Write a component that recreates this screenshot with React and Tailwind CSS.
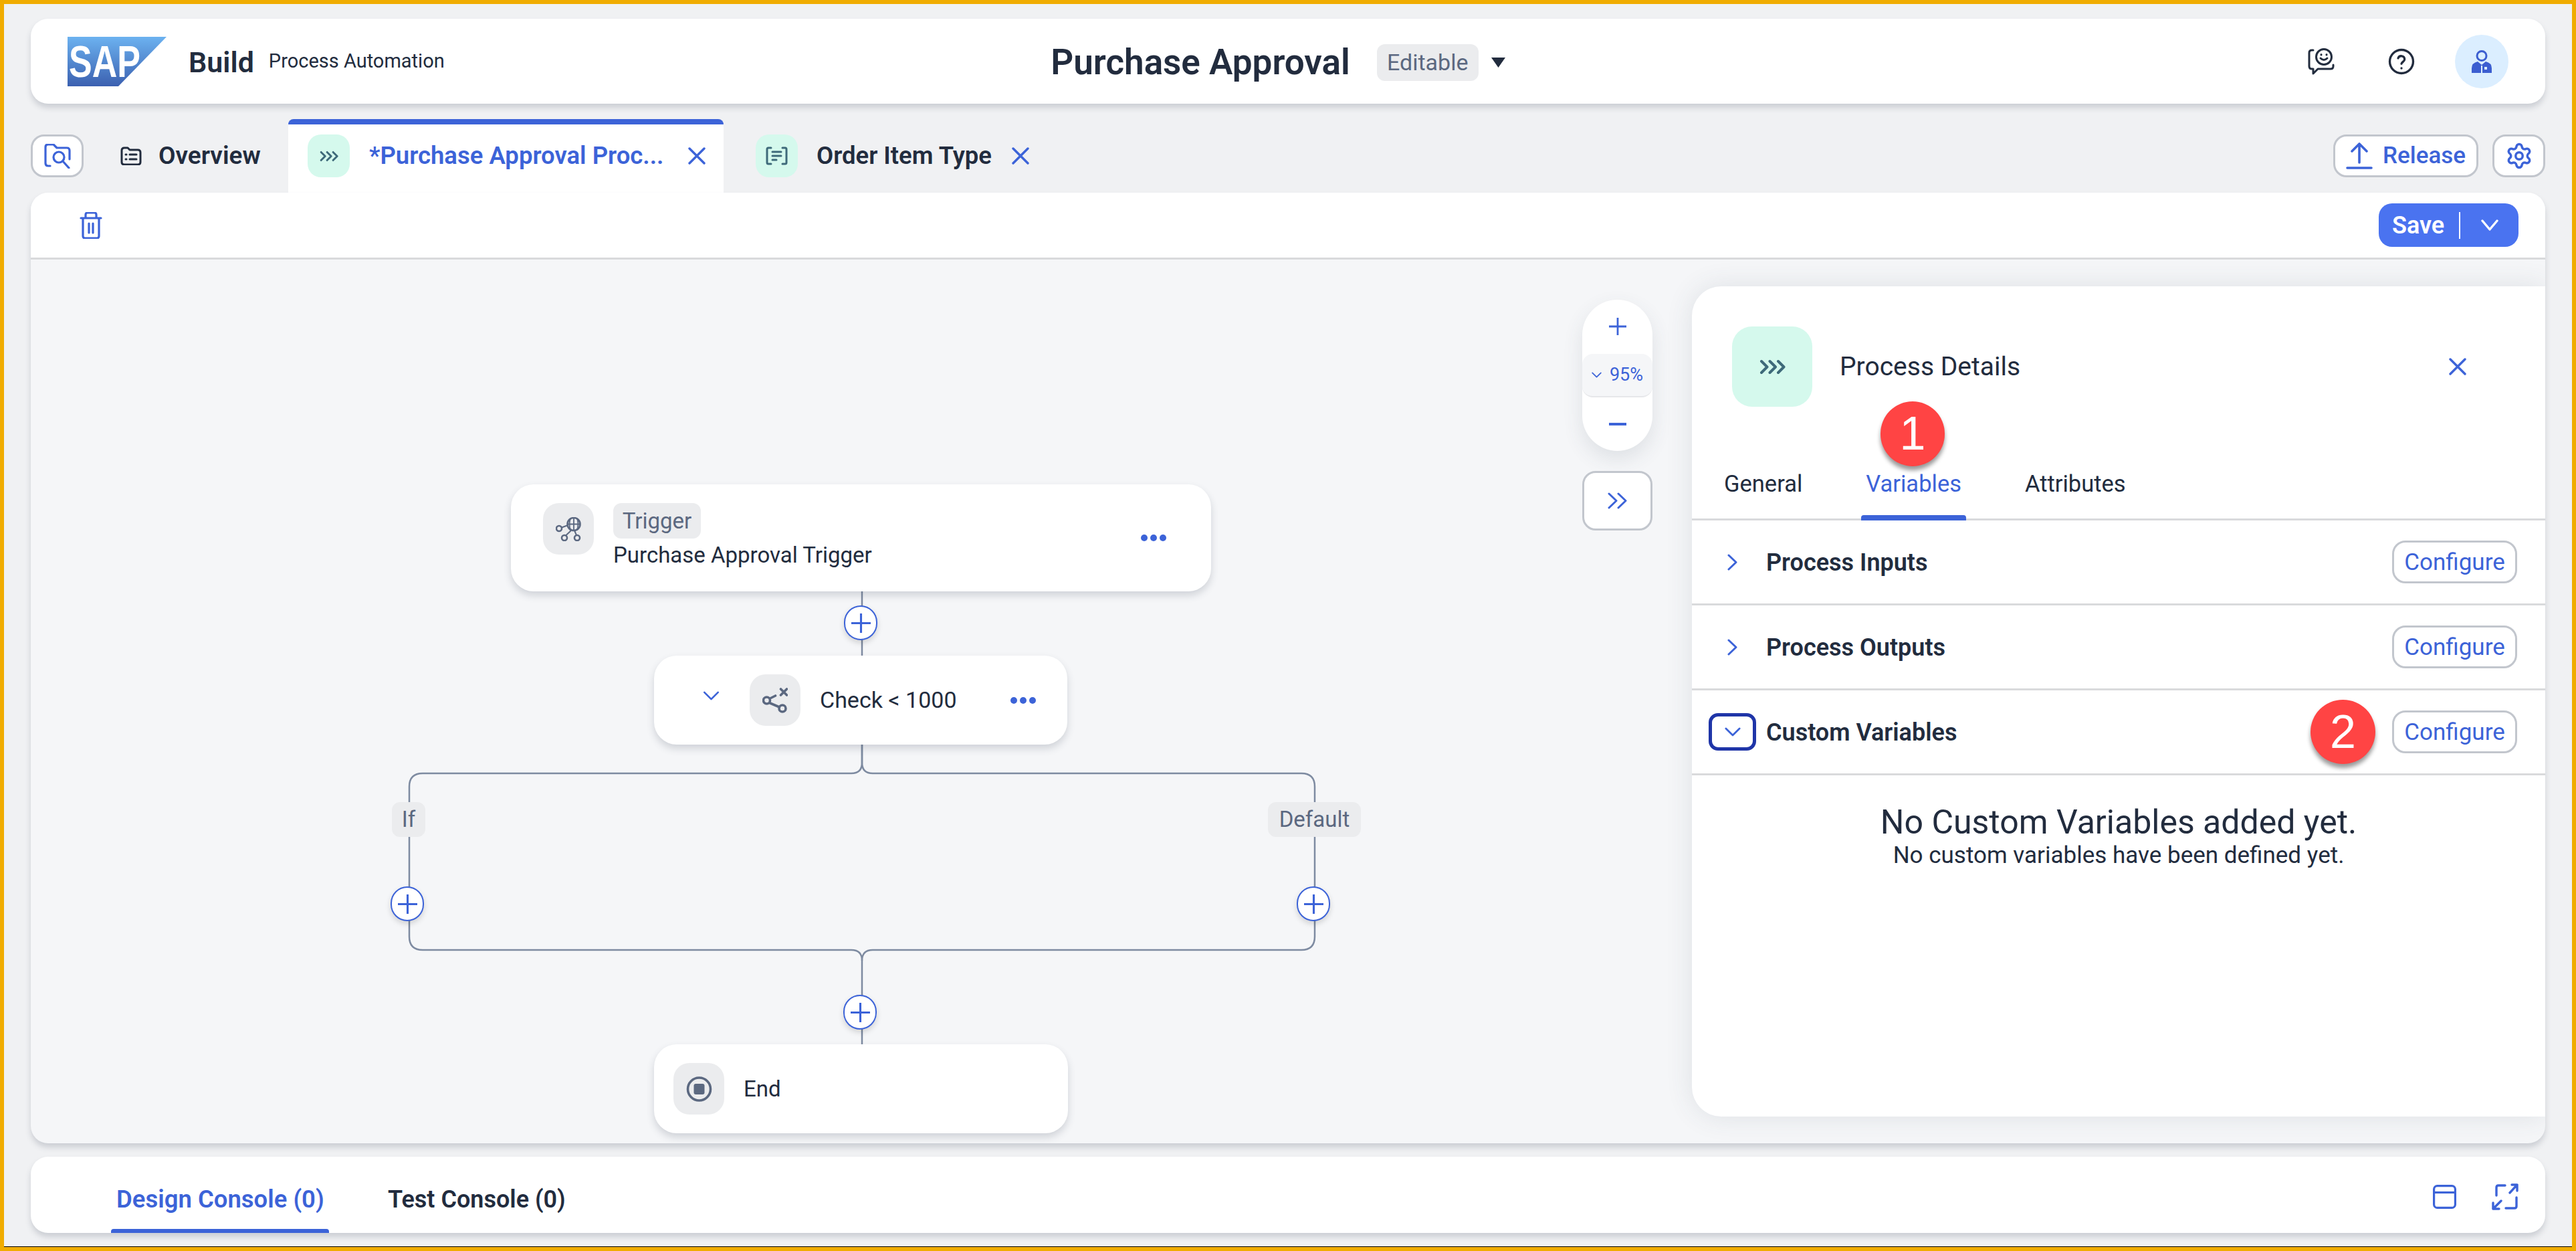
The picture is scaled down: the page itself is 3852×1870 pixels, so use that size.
import React from 'react'
import { Settings } from 'lucide-react'

const Chevrons3 = ({ className }) => (
  <svg viewBox="0 0 39 23" className={className} fill="none" stroke="#3e6a7a" strokeWidth="4" strokeLinecap="round" strokeLinejoin="round">
    <path d="M3 3l8.5 8.5L3 20M15.5 3l8.5 8.5-8.5 8.5M28 3l8.5 8.5L28 20" />
  </svg>
)

const Close = ({ className }) => (
  <svg viewBox="0 0 26 26" className={className} fill="none" stroke="#3c63d8" strokeWidth="3.4" strokeLinecap="round">
    <path d="M2 2l22 22M24 2L2 24" />
  </svg>
)

const ChevronDown = ({ className, sw = 3 }) => (
  <svg viewBox="0 0 26 15" className={className} fill="none" stroke="#3c63d8" strokeWidth={sw} strokeLinecap="round" strokeLinejoin="round">
    <path d="M2 2l11 11L24 2" />
  </svg>
)

const ChevronRight = () => (
  <svg viewBox="0 0 17 25" className="w-[17px] h-[25px]" fill="none" stroke="#3c63d8" strokeWidth="3" strokeLinecap="round" strokeLinejoin="round">
    <path d="M3 2l11 10.5L3 23" />
  </svg>
)

const PlusLines = ({ className, sw = 3 }) => (
  <svg viewBox="0 0 28 28" className={className} fill="none" stroke="#3c63d8" strokeWidth={sw}>
    <path d="M14 0v28M0 14h28" />
  </svg>
)

function Dots() {
  return (
    <div className="flex gap-[4px]">
      <span className="w-[10px] h-[10px] rounded-full bg-[#3c63d8]" />
      <span className="w-[10px] h-[10px] rounded-full bg-[#3c63d8]" />
      <span className="w-[10px] h-[10px] rounded-full bg-[#3c63d8]" />
    </div>
  )
}

function ConfigureBtn() {
  return (
    <button className="w-[187px] h-[64px] pt-[2px] rounded-[20px] border-[3px] border-[#c2c6cd] bg-white text-[#3c63d8] text-[35px]">
      Configure
    </button>
  )
}

function AccordionRow({ label, open, children }) {
  return (
    <div className="h-[127px] border-b-[3px] border-[#d9dadc] flex items-center pl-[25px] pr-[42px]">
      <div className={open
        ? 'w-[71px] h-[56px] rounded-[14px] border-[5px] border-[#1f35a8] flex items-center justify-center'
        : 'w-[71px] h-[56px] flex items-center justify-center'}>
        {open ? <ChevronDown className="w-[24px] h-[14px]" /> : <ChevronRight />}
      </div>
      <span className="ml-[15px] mt-[2px] text-[36px] font-semibold text-[#222c3e]">{label}</span>
      <div className="ml-auto flex items-center gap-[25px]">
        {children}
        <ConfigureBtn />
      </div>
    </div>
  )
}

function PlusNode({ className }) {
  return (
    <div className={`absolute w-[50px] h-[52px] rounded-full bg-white border-[2.5px] border-[#3c63d8] shadow-[0_4px_8px_rgba(0,0,0,0.15)] flex items-center justify-center ${className}`}>
      <PlusLines className="w-[29px] h-[29px]" />
    </div>
  )
}

function Chip({ children, className = '' }) {
  return (
    <span className={`bg-[#ebecee] rounded-[12px] text-[#5b6880] flex items-center justify-center ${className}`}>
      {children}
    </span>
  )
}

function IconBox({ children, className = '' }) {
  return (
    <div className={`w-[76px] h-[77px] rounded-[24px] bg-[#ebecee] flex items-center justify-center shrink-0 ${className}`}>
      {children}
    </div>
  )
}

function Canvas() {
  return (
    <>
      <svg className="absolute left-0 top-0 w-[2100px] h-[1321px]" viewBox="0 0 2100 1321" fill="none" stroke="#7e8ba1" strokeWidth="2.5">
        <path d="M1243 496V592" />
        <path d="M1243 725v27q0 16-16 16H586q-20 0-20 20V1012q0 20 20 20H1227q16 0 16 16V1173" />
        <path d="M1243 725v27q0 16 16 16H1900q20 0 20 20V1012q0 20-20 20H1259q-16 0-16 16" />
      </svg>

      <div className="absolute left-[718px] top-[336px] w-[1047px] h-[160px] rounded-[34px] bg-white shadow-[0_6px_12px_rgba(60,70,90,0.2)] flex pl-[48px] pt-[28px]">
        <IconBox>
          <svg viewBox="0 0 38 36" className="w-[38px] h-[36px]" fill="none" stroke="#5b6880" strokeWidth="2.6">
            <circle cx="27" cy="10.5" r="9.5" />
            <path d="M17.5 10.5h19M27 1v19M22 2q-3 8.500 0 17M32 2q3 8.500 0 17" strokeWidth="1.8" />
            <circle cx="5" cy="17" r="4" />
            <circle cx="13" cy="31" r="4" />
            <circle cx="32" cy="31" r="4" />
            <path d="M9 15.500l8-3M23 20l-8 7.500M28 20l3 7" strokeWidth="2" />
          </svg>
        </IconBox>
        <div className="ml-[29px]">
          <Chip className="w-[131px] h-[53px] text-[33px]">Trigger</Chip>
          <div className="mt-[3px] text-[33px] text-[#222c3e] leading-[44px] whitespace-nowrap">Purchase Approval Trigger</div>
        </div>
        <div className="ml-auto mr-[67px] mt-[47px]"><Dots /></div>
      </div>

      <PlusNode className="left-[1216px] top-[517px]" />

      <div className="absolute left-[932px] top-[592px] w-[618px] h-[133px] rounded-[34px] bg-white shadow-[0_6px_12px_rgba(60,70,90,0.2)] flex items-center pl-[73px] pr-[47px]">
        <ChevronDown className="w-[25px] h-[14px] -mt-[13px]" sw={2.8} />
        <IconBox className="ml-[45px]">
          <svg viewBox="0 0 38 38" className="w-[38px] h-[38px]" fill="none" stroke="#5b6880" strokeWidth="3.6" strokeLinecap="round">
            <circle cx="6.500" cy="19" r="5" />
            <circle cx="30" cy="31" r="5" />
            <path d="M11.500 16l8-4M11.500 23l14 6M27.500 2l9 9M36.500 2l-9 9" />
          </svg>
        </IconBox>
        <span className="ml-[29px] text-[34px] text-[#222c3e]">Check &lt; 1000</span>
        <div className="ml-auto"><Dots /></div>
      </div>

      <Chip className="absolute left-[540px] top-[811px] w-[50px] h-[52px] text-[33px]">If</Chip>
      <Chip className="absolute left-[1850px] top-[811px] w-[139px] h-[52px] text-[33px]">Default</Chip>
      <PlusNode className="left-[538px] top-[937px]" />
      <PlusNode className="left-[1893px] top-[937px]" />
      <PlusNode className="left-[1215px] top-[1099px]" />

      <div className="absolute left-[932px] top-[1173px] w-[619px] h-[133px] rounded-[34px] bg-white shadow-[0_6px_12px_rgba(60,70,90,0.2)] flex items-center pl-[29px]">
        <IconBox className="w-[75px]">
          <svg viewBox="0 0 39 38" className="w-[39px] h-[38px]">
            <circle cx="19.500" cy="19" r="17" fill="none" stroke="#5b6880" strokeWidth="3.6" />
            <rect x="11.500" y="11" width="16" height="16" rx="3" fill="#5b6880" />
          </svg>
        </IconBox>
        <span className="ml-[29px] text-[33px] text-[#222c3e]">End</span>
      </div>

      <div className="absolute left-[2320px] top-[60px] w-[105px] h-[226px] rounded-full bg-white shadow-[0_12px_30px_rgba(60,70,90,0.12)] flex flex-col items-center pt-[27px]">
        <PlusLines className="w-[26px] h-[26px]" sw={3} />
        <div className="mt-[28px] w-[105px] h-[65px] rounded-[16px] bg-[#f5f6f8] border-b-2 border-[#e6e7ea] flex items-center justify-center gap-[12px] text-[#3c63d8] text-[27px]">
          <ChevronDown className="w-[15px] h-[9px]" sw={3} />
          <span>95%</span>
        </div>
        <div className="mt-[38px] w-[26px] h-[4px] bg-[#3c63d8]" />
      </div>
      <div className="absolute left-[2320px] top-[316px] w-[105px] h-[89px] rounded-[20px] border-[3px] border-[#c2c6cd] bg-white flex items-center justify-center">
        <svg viewBox="0 0 31 25" className="w-[31px] h-[25px]" fill="none" stroke="#3c63d8" strokeWidth="3" strokeLinecap="round" strokeLinejoin="round">
          <path d="M3 2l11 10.500L3 23M17 2l11 10.500L17 23" />
        </svg>
      </div>
    </>
  )
}

function DetailsPanel() {
  return (
    <div className="relative z-10 w-[1276px] h-full bg-white rounded-l-[44px] shadow-[0_0_40px_rgba(60,70,90,0.12)] pt-[60px]">
      <div className="flex items-center h-[120px] pl-[60px]">
        <div className="w-[120px] h-[120px] rounded-[30px] bg-[#d5f9ed] flex items-center justify-center">
          <Chevrons3 className="w-[39px] h-[23px]" />
        </div>
        <span className="ml-[41px] text-[39px] text-[#222c3e]">Process Details</span>
        <Close className="ml-auto mr-[118px] w-[26px] h-[26px]" />
      </div>

      <div className="relative h-[170px] border-b-[3px] border-[#d9dadc] flex items-end pl-[41px] gap-[81px] text-[34.5px] text-[#222c3e]">
        <div className="px-[7px] h-[77px] leading-[50px]">General</div>
        <div className="relative px-[7px] h-[77px] leading-[50px] text-[#3c63d8]">
          Variables
          <span className="absolute left-0 right-0 -bottom-[3px] h-[8px] rounded-t-[4px] bg-[#3c63d8]" />
        </div>
        <div className="px-[7px] h-[77px] leading-[50px]">Attributes</div>
        <span className="absolute left-[282px] top-[-8px] w-[96px] h-[97px] rounded-full bg-[#ff4444] text-white text-[70px] flex items-center justify-center shadow-[0_6px_6px_rgba(0,0,0,0.4)] [font-family:'Liberation_Sans',sans-serif]">1</span>
      </div>

      <AccordionRow label="Process Inputs" />
      <AccordionRow label="Process Outputs" />
      <AccordionRow label="Custom Variables" open>
        <span className="w-[97px] h-[96px] rounded-full bg-[#ff4444] text-white text-[70px] flex items-center justify-center shadow-[0_6px_6px_rgba(0,0,0,0.4)] [font-family:'Liberation_Sans',sans-serif]">2</span>
      </AccordionRow>

      <div className="pt-[40px] text-center text-[#222c3e]">
        <div className="text-[50px] leading-[60px]">No Custom Variables added yet.</div>
        <div className="text-[35px] leading-[40px]">No custom variables have been defined yet.</div>
      </div>
    </div>
  )
}

export default function App() {
  return (
    <div className="w-[3852px] h-[1870px] border-[6px] border-[#f0ac00] bg-[#f0f1f3] overflow-hidden [font-family:Roboto,sans-serif]">
      <div className="h-full border-b border-black px-[40px] pt-[22px] flex flex-col">
        <header className="h-[127px] shrink-0 rounded-[26px] bg-white shadow-[0_6px_8px_rgba(60,70,90,0.2)] grid grid-cols-[1fr_auto_1fr] items-center pl-[55px] pr-[55px]">
          <div className="flex items-center">
            <svg viewBox="0 0 148 74" className="w-[148px] h-[74px]">
              <defs>
                <linearGradient id="sapGrad" x1="0" y1="0" x2="0" y2="1">
                  <stop offset="0" stopColor="#6cb2f0" />
                  <stop offset="1" stopColor="#3b60b0" />
                </linearGradient>
              </defs>
              <polygon points="0,0 148,0 76,74 0,74" fill="url(#sapGrad)" />
              <text x="2" y="60" fill="#fff" fontSize="66" fontWeight="700" textLength="107" lengthAdjust="spacingAndGlyphs" fontFamily="Liberation Sans, sans-serif">SAP</text>
            </svg>
            <span className="ml-[33px] mt-[3px] text-[43px] font-semibold text-[#222c3e]">Build</span>
            <span className="ml-[22px] text-[29px] text-[#222c3e]">Process Automation</span>
          </div>
          <div className="flex items-center pr-[30px] pt-[4px]">
            <span className="text-[53px] font-semibold text-[#222c3e] leading-none whitespace-nowrap">Purchase Approval</span>
            <Chip className="ml-[40px] w-[152px] h-[55px] text-[34px]">Editable</Chip>
            <svg viewBox="0 0 21 15" className="ml-[19px] w-[21px] h-[15px]"><path d="M0 0h21L10.500 15z" fill="#222c3e" /></svg>
          </div>
          <div className="flex items-center justify-end">
            <svg viewBox="0 0 40 40" className="w-[40px] h-[40px]" fill="none" stroke="#222c3e" strokeWidth="3" strokeLinecap="round" strokeLinejoin="round">
              <circle cx="24" cy="13" r="11.500" />
              <path d="M19 15q5 5 10 0" />
              <path d="M20 9.500v.5M28 9.500v.5" />
              <path d="M8 3H6Q2 3 2 7V27q0 4 4 4H8v7l7-7H34q4 0 4-4V25" />
            </svg>
            <svg viewBox="0 0 24 24" className="ml-[80px] w-[40px] h-[40px]" fill="none" stroke="#222c3e" strokeWidth="2" strokeLinecap="round" strokeLinejoin="round">
              <circle cx="12" cy="12" r="10.500" />
              <path d="M9 9a3 3 0 0 1 5.800 1c0 2-2.800 2.600-2.800 4" />
              <path d="M12 18h.01" />
            </svg>
            <div className="ml-[60px] w-[80px] h-[80px] rounded-full bg-[#dbeeff] flex items-center justify-center">
              <svg viewBox="0 0 30 34" className="w-[30px] h-[34px]">
                <circle cx="15" cy="8.500" r="7" fill="none" stroke="#3c5ed0" strokeWidth="3" />
                <path d="M0 34V27q0-8 9-10l6 5 6-5q9 2 9 10v7z" fill="#3c5ed0" />
                <path d="M15 23v11" stroke="#dbeeff" strokeWidth="2" />
                <rect x="19" y="25" width="4" height="4" fill="#dbeeff" />
              </svg>
            </div>
          </div>
        </header>

        <nav className="mt-[23px] h-[110px] shrink-0 flex items-center">
          <button className="w-[79px] h-[64px] rounded-[20px] border-[3px] border-[#c2c6cd] bg-white flex items-center justify-center">
            <svg viewBox="0 0 40 37" className="w-[40px] h-[37px]" fill="none" stroke="#3c63d8" strokeWidth="3.200" strokeLinecap="round" strokeLinejoin="round">
              <path d="M9 33H6q-4 0-4-4V5q0-4 4-4h8l5 5h15q4 0 4 4v13" />
              <circle cx="22" cy="20" r="8" />
              <path d="M28 26l9 10" />
            </svg>
          </button>
          <div className="ml-[55px] flex items-center w-[251px]">
            <svg viewBox="0 0 32 28" className="w-[32px] h-[28px]" fill="none" stroke="#222c3e" strokeWidth="3" strokeLinecap="round" strokeLinejoin="round">
              <path d="M2 6q0-4 4-4h5l3 3h12q4 0 4 4v14q0 4-4 4H6q-4 0-4-4z" />
              <path d="M8 12h1M14 12h10M8 19h1M14 19h10" />
            </svg>
            <span className="ml-[25px] text-[37px] font-semibold text-[#222c3e]">Overview</span>
          </div>
          <div className="self-stretch w-[651px] bg-white rounded-t-[8px] border-t-[8px] border-[#3c63d8] flex items-center pl-[29px] pb-[8px]">
            <div className="w-[63px] h-[64px] rounded-[20px] bg-[#d5f9ed] flex items-center justify-center shrink-0">
              <Chevrons3 className="w-[28px] h-[17px]" />
            </div>
            <span className="ml-[29px] w-[477px] text-[36.5px] font-semibold text-[#3c63d8] whitespace-nowrap">*Purchase Approval Proc...</span>
            <Close className="w-[26px] h-[26px]" />
          </div>
          <div className="ml-[48px] w-[63px] h-[64px] rounded-[20px] bg-[#d5f9ed] flex items-center justify-center">
            <svg viewBox="0 0 33 28" className="w-[33px] h-[28px]" fill="none" stroke="#3e6a7a" strokeWidth="3" strokeLinecap="round">
              <path d="M8 2H4Q2 2 2 4v20q0 2 2 2h4M25 2h4q2 0 2 2v20q0 2-2 2h-4M10 8h13M10 14h13M10 20h6" />
            </svg>
          </div>
          <span className="ml-[28px] w-[292px] text-[36.5px] font-semibold text-[#222c3e] whitespace-nowrap">Order Item Type</span>
          <Close className="w-[26px] h-[26px]" />

          <button className="ml-auto w-[217px] h-[64px] rounded-[20px] border-[3px] border-[#c2c6cd] bg-white flex items-center pl-[16px] text-[#3c63d8] text-[35px] font-medium">
            <svg viewBox="0 0 40 40" className="w-[40px] h-[40px]" fill="none" stroke="#3c63d8" strokeWidth="3.600" strokeLinecap="round" strokeLinejoin="round">
              <path d="M20 30V3M9 13L20 2l11 11M2 38h36" />
            </svg>
            <span className="ml-[15px]">Release</span>
          </button>
          <button className="ml-[21px] w-[79px] h-[64px] rounded-[20px] border-[3px] border-[#c2c6cd] bg-white flex items-center justify-center">
            <Settings className="w-[42px] h-[42px] text-[#3c63d8]" strokeWidth={2} />
          </button>
        </nav>

        <main className="h-[1421px] shrink-0 rounded-[26px] bg-[#f5f6f8] shadow-[0_6px_8px_rgba(60,70,90,0.2)] flex flex-col overflow-hidden">
          <div className="h-[100px] shrink-0 bg-white border-b-[3px] border-[#d9dadc] flex items-center pl-[73px] pr-[40px]">
            <svg viewBox="0 0 34 40" className="w-[34px] h-[40px]" fill="none" stroke="#3c63d8" strokeWidth="3.200" strokeLinecap="round" strokeLinejoin="round">
              <path d="M2 9h30M9 9V4q0-3 3-3h10q3 0 3 3v5M5 9v27q0 3 3 3h18q3 0 3-3V9M14 17v14M20 17v14" />
            </svg>
            <button className="ml-auto w-[209px] h-[65px] rounded-[20px] bg-[#4a73f0] flex items-center pl-[20px] text-white text-[36px] font-semibold">
              <span className="w-[80px] text-left">Save</span>
              <span className="ml-[20px] w-[2px] h-[40px] bg-white" />
              <svg viewBox="0 0 26 17" className="ml-[31px] w-[26px] h-[17px]" fill="none" stroke="#fff" strokeWidth="3.400" strokeLinecap="round" strokeLinejoin="round">
                <path d="M2 2l11 13L24 2" />
              </svg>
            </button>
          </div>
          <div className="relative flex-1 flex justify-end py-[40px]">
            <Canvas />
            <DetailsPanel />
          </div>
        </main>

        <footer className="mt-[20px] h-[114px] shrink-0 rounded-[26px] bg-white shadow-[0_6px_8px_rgba(60,70,90,0.2)] flex items-center pl-[120px] pr-[40px] overflow-hidden">
          <div className="relative h-full flex items-center pt-[14px] px-[8px] text-[36.5px] font-semibold text-[#3c63d8] w-[326px] whitespace-nowrap">
            Design Console (0)
            <span className="absolute left-0 right-0 bottom-0 h-[6px] rounded-t-[4px] bg-[#3c63d8]" />
          </div>
          <span className="ml-[88px] pt-[14px] text-[36px] font-semibold text-[#222c3e]">Test Console (0)</span>
          <svg viewBox="0 0 35 36" className="ml-auto mt-[6px] w-[35px] h-[36px]" fill="none" stroke="#3c63d8" strokeWidth="3.200">
            <rect x="1.600" y="1.600" width="31.800" height="32.800" rx="5" />
            <path d="M2 11.500h31" />
          </svg>
          <svg viewBox="0 0 40 40" className="ml-[53px] mt-[6px] w-[40px] h-[40px]" fill="none" stroke="#3c63d8" strokeWidth="3.400" strokeLinecap="round" strokeLinejoin="round">
            <path d="M20 3H10Q7 3 7 6v12M37 21v13q0 3-3 3H21M27 14L38 2M30 2h8v9M14 26L2 38M2 29v9h9" />
          </svg>
        </footer>
      </div>
    </div>
  )
}
